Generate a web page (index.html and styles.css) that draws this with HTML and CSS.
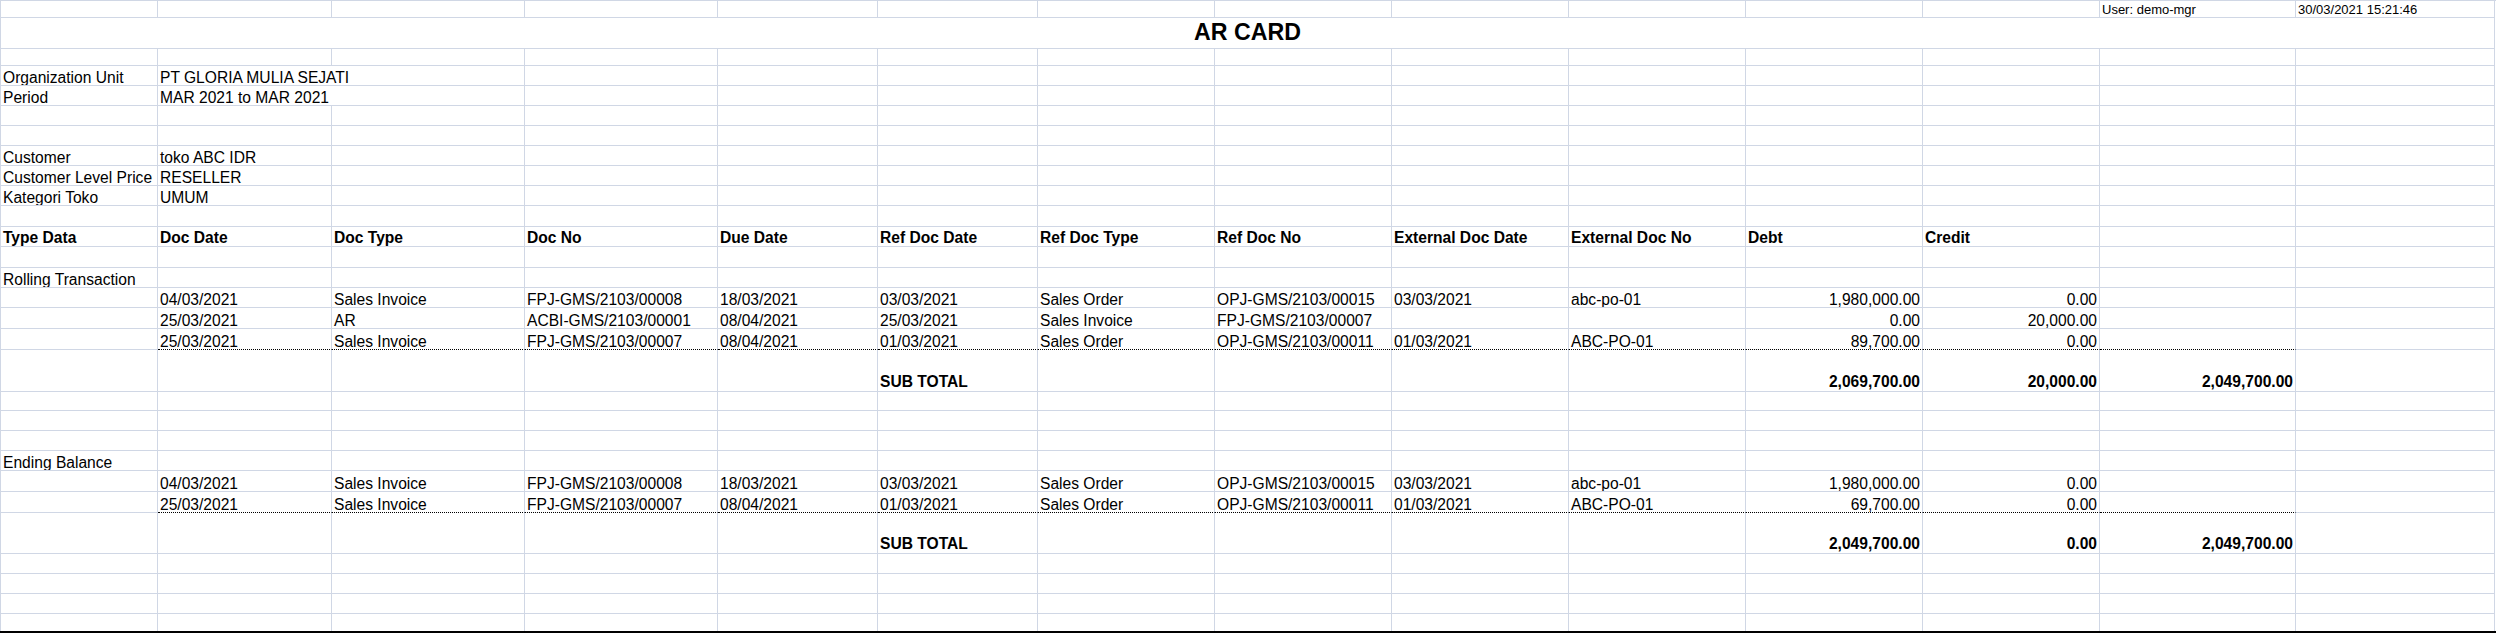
FILE: index.html
```html
<!DOCTYPE html>
<html>
<head>
<meta charset="utf-8">
<title>AR CARD</title>
<link rel="stylesheet" href="styles.css">
</head>
<body>
<div class="sheet">
  <div class="row h17 small"><span></span><span></span><span></span><span></span><span></span><span></span><span></span><span></span><span></span><span></span><span></span><span></span><span>User: demo-mgr</span><span>30/03/2021 15:21:46</span></div>
  <div class="row h31"><span class="title">AR CARD</span></div>
  <div class="row h17"><span></span><span></span><span></span><span></span><span></span><span></span><span></span><span></span><span></span><span></span><span></span><span></span><span></span><span></span></div>
  <div class="row h20"><span>Organization Unit</span><span class="span2">PT GLORIA MULIA SEJATI</span><span></span><span></span><span></span><span></span><span></span><span></span><span></span><span></span><span></span><span></span><span></span></div>
  <div class="row h20"><span>Period</span><span class="span2">MAR 2021 to MAR 2021</span><span></span><span></span><span></span><span></span><span></span><span></span><span></span><span></span><span></span><span></span><span></span></div>
  <div class="row h20"><span></span><span></span><span></span><span></span><span></span><span></span><span></span><span></span><span></span><span></span><span></span><span></span><span></span><span></span></div>
  <div class="row h20"><span></span><span></span><span></span><span></span><span></span><span></span><span></span><span></span><span></span><span></span><span></span><span></span><span></span><span></span></div>
  <div class="row h20"><span>Customer</span><span>toko ABC IDR</span><span></span><span></span><span></span><span></span><span></span><span></span><span></span><span></span><span></span><span></span><span></span><span></span></div>
  <div class="row h20"><span>Customer Level Price</span><span>RESELLER</span><span></span><span></span><span></span><span></span><span></span><span></span><span></span><span></span><span></span><span></span><span></span><span></span></div>
  <div class="row h20"><span>Kategori Toko</span><span>UMUM</span><span></span><span></span><span></span><span></span><span></span><span></span><span></span><span></span><span></span><span></span><span></span><span></span></div>
  <div class="row h21"><span></span><span></span><span></span><span></span><span></span><span></span><span></span><span></span><span></span><span></span><span></span><span></span><span></span><span></span></div>
  <div class="row h20 head"><span>Type Data</span><span>Doc Date</span><span>Doc Type</span><span>Doc No</span><span>Due Date</span><span>Ref Doc Date</span><span>Ref Doc Type</span><span>Ref Doc No</span><span>External Doc Date</span><span>External Doc No</span><span>Debt</span><span>Credit</span><span></span><span></span></div>
  <div class="row h21"><span></span><span></span><span></span><span></span><span></span><span></span><span></span><span></span><span></span><span></span><span></span><span></span><span></span><span></span></div>
  <div class="row h20"><span>Rolling Transaction</span><span></span><span></span><span></span><span></span><span></span><span></span><span></span><span></span><span></span><span></span><span></span><span></span><span></span></div>
  <div class="row h20"><span></span><span>04/03/2021</span><span>Sales Invoice</span><span>FPJ-GMS/2103/00008</span><span>18/03/2021</span><span>03/03/2021</span><span>Sales Order</span><span>OPJ-GMS/2103/00015</span><span>03/03/2021</span><span>abc-po-01</span><span class="n">1,980,000.00</span><span class="n">0.00</span><span></span><span></span></div>
  <div class="row h21"><span></span><span>25/03/2021</span><span>AR</span><span>ACBI-GMS/2103/00001</span><span>08/04/2021</span><span>25/03/2021</span><span>Sales Invoice</span><span>FPJ-GMS/2103/00007</span><span></span><span></span><span class="n">0.00</span><span class="n">20,000.00</span><span></span><span></span></div>
  <div class="row h21 dotted"><span></span><span>25/03/2021</span><span>Sales Invoice</span><span>FPJ-GMS/2103/00007</span><span>08/04/2021</span><span>01/03/2021</span><span>Sales Order</span><span>OPJ-GMS/2103/00011</span><span>01/03/2021</span><span>ABC-PO-01</span><span class="n">89,700.00</span><span class="n">0.00</span><span></span><span></span></div>
  <div class="row h42 total"><span></span><span></span><span></span><span></span><span></span><span>SUB TOTAL</span><span></span><span></span><span></span><span></span><span class="n">2,069,700.00</span><span class="n">20,000.00</span><span class="n">2,049,700.00</span><span></span></div>
  <div class="row h19"><span></span><span></span><span></span><span></span><span></span><span></span><span></span><span></span><span></span><span></span><span></span><span></span><span></span><span></span></div>
  <div class="row h20"><span></span><span></span><span></span><span></span><span></span><span></span><span></span><span></span><span></span><span></span><span></span><span></span><span></span><span></span></div>
  <div class="row h20"><span></span><span></span><span></span><span></span><span></span><span></span><span></span><span></span><span></span><span></span><span></span><span></span><span></span><span></span></div>
  <div class="row h20"><span>Ending Balance</span><span></span><span></span><span></span><span></span><span></span><span></span><span></span><span></span><span></span><span></span><span></span><span></span><span></span></div>
  <div class="row h21"><span></span><span>04/03/2021</span><span>Sales Invoice</span><span>FPJ-GMS/2103/00008</span><span>18/03/2021</span><span>03/03/2021</span><span>Sales Order</span><span>OPJ-GMS/2103/00015</span><span>03/03/2021</span><span>abc-po-01</span><span class="n">1,980,000.00</span><span class="n">0.00</span><span></span><span></span></div>
  <div class="row h21 dotted"><span></span><span>25/03/2021</span><span>Sales Invoice</span><span>FPJ-GMS/2103/00007</span><span>08/04/2021</span><span>01/03/2021</span><span>Sales Order</span><span>OPJ-GMS/2103/00011</span><span>01/03/2021</span><span>ABC-PO-01</span><span class="n">69,700.00</span><span class="n">0.00</span><span></span><span></span></div>
  <div class="row h41 total"><span></span><span></span><span></span><span></span><span></span><span>SUB TOTAL</span><span></span><span></span><span></span><span></span><span class="n">2,049,700.00</span><span class="n">0.00</span><span class="n">2,049,700.00</span><span></span></div>
  <div class="row h20"><span></span><span></span><span></span><span></span><span></span><span></span><span></span><span></span><span></span><span></span><span></span><span></span><span></span><span></span></div>
  <div class="row h20"><span></span><span></span><span></span><span></span><span></span><span></span><span></span><span></span><span></span><span></span><span></span><span></span><span></span><span></span></div>
  <div class="row h20"><span></span><span></span><span></span><span></span><span></span><span></span><span></span><span></span><span></span><span></span><span></span><span></span><span></span><span></span></div>
  <div class="row h17 last"><span></span><span></span><span></span><span></span><span></span><span></span><span></span><span></span><span></span><span></span><span></span><span></span><span></span><span></span></div>
</div>
<div class="edge"></div>
</body>
</html>
```

FILE: styles.css
```css
* { box-sizing: border-box; }
html, body { margin: 0; padding: 0; background: #fff; }
body {
  width: 2496px;
  height: 634px;
  overflow: hidden;
  font-family: "Liberation Sans", Arial, sans-serif;
  font-size: 15.6px;
  color: #000;
}
.sheet {
  border-top: 1px solid #d0d7e5;
  border-left: 1px solid #d0d7e5;
}
.row {
  display: grid;
  grid-template-columns: 157px 174px 193px 193px 160px 160px repeat(6, 177px) 196px 199px;
}
.row > span {
  display: flex;
  align-items: flex-end;
  min-width: 0;
  padding: 0 2px;
  line-height: 15px;
  white-space: nowrap;
  overflow: hidden;
  border-right: 1px solid #d0d7e5;
  border-bottom: 1px solid #d0d7e5;
}
.row > .n { justify-content: flex-end; }
.row > .span2 { grid-column: span 2; }
.row > .title {
  grid-column: 1 / -1;
  justify-content: center;
  align-items: center;
  font-weight: bold;
  font-size: 23.2px;
  line-height: 1;
}
.small > span { font-size: 13px; line-height: 13px; padding-bottom: 1px; }
.head > span { font-weight: bold; padding-bottom: 1px; }
.total > span { font-weight: bold; padding-bottom: 2px; }
.dotted > span:nth-child(n+2):nth-child(-n+13) { border-bottom: 1px dotted #000; }
.last > span { border-bottom: none; }
.h17 { height: 17px; }
.h19 { height: 19px; }
.h20 { height: 20px; }
.h21 { height: 21px; }
.h31 { height: 31px; }
.h41 { height: 41px; }
.h42 { height: 42px; }
.edge { height: 2px; background: #000; }
```
